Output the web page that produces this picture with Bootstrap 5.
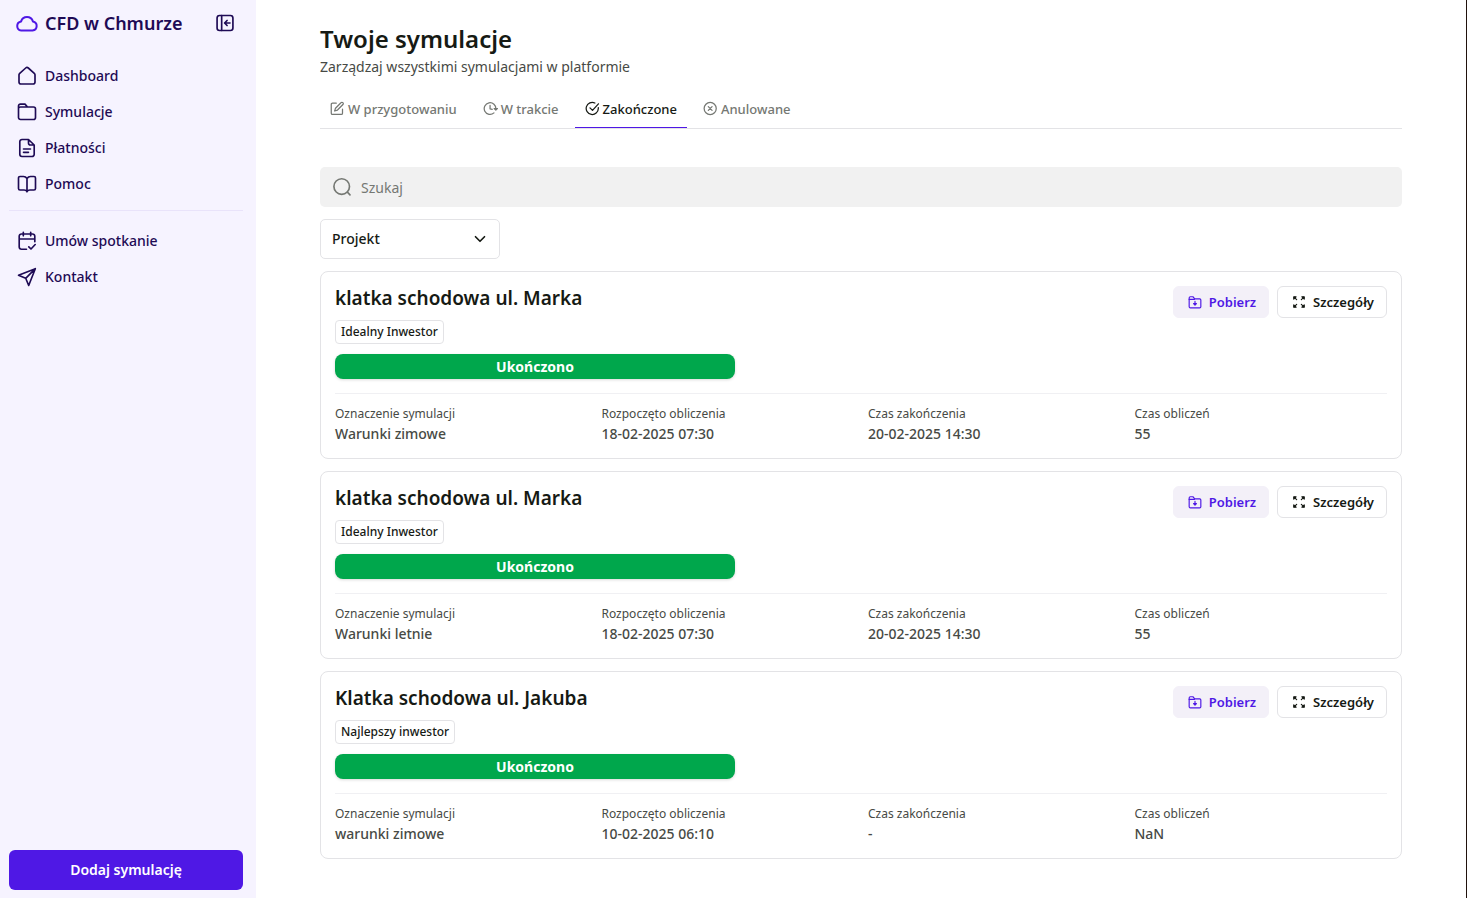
<!DOCTYPE html>
<html lang="pl">
<head>
<meta charset="utf-8">
<meta name="viewport" content="width=device-width, initial-scale=1">
<title>CFD w Chmurze – Twoje symulacje</title>
<link href="https://cdn.jsdelivr.net/npm/bootstrap@5.3.0/dist/css/bootstrap.min.css" rel="stylesheet">
<style>
  :root {
    --brand: #4f18e5;
    --navy: #1e0a55;
    --ink: #161a14;
    --soft: #474a45;
    --muted: #757873;
    --line: #e3e3e6;
  }
  body {
    font-family: "Noto Sans", sans-serif;
    font-size: 14px;
    line-height: 20px;
    color: var(--ink);
    background: #fff;
  }
  svg { fill: none; stroke: currentColor; stroke-width: 2; stroke-linecap: round; stroke-linejoin: round; flex-shrink: 0; }
  .line-icon { stroke-width: 1.65; }
  .shell { border-right: 1px solid #20120d; }
  .side { width: 256px; padding: 8px 13px 8px 9px; background: #f6f3ff; color: var(--navy); position: sticky; top: 0; }
  .brand { font-size: 18px; line-height: 30px; font-weight: 600; color: var(--navy); gap: 6px; padding-left: 6px; }
  .brand svg { color: var(--brand); }
  .collapse-btn { color: var(--navy); padding: 0 8px; line-height: 1; }
  .side .nav-link { display: flex; align-items: center; gap: 8px; height: 36px; padding: 0 8px; color: var(--navy); font-weight: 500; }
  .side-main { margin-top: 20px; padding-bottom: 8px; border-bottom: 1px solid #e9e3fa; }
  .side-more { padding-top: 12px; }
  .btn-add { height: 40px; padding: 0 12px 2px; background: var(--brand); color: #fff; font-size: 14px; font-weight: 600; border-radius: 6px; }
  .btn-add:hover { background: #4312cb; color: #fff; }
  .page { padding: 24px 64px; min-width: 0; }
  .page-title { font-size: 24px; line-height: 30px; font-weight: 600; }
  .page-lead { color: var(--soft); margin: 3px 0 22px; }
  .tabs { border-bottom: 1px solid var(--line); gap: 6px; margin-bottom: 38px; }
  .tabs .nav-link { display: flex; align-items: center; gap: 3px; height: 29px; padding: 0 10px 9px; font-size: 13px; line-height: 18px; font-weight: 500; color: var(--muted); border-bottom: 1px solid transparent; }
  .tabs .nav-link.active { color: var(--ink); border-bottom-color: var(--brand); }
  .search { height: 40px; padding: 0 12px; gap: 9px; background: #f1f1f1; border-radius: 5px; color: var(--muted); }
  .search .form-control { padding: 0; border: 0; background: none; box-shadow: none; font-size: 14px; }
  .search .form-control::placeholder { color: var(--muted); }
  .project-select { width: 180px; height: 40px; margin: 12px 0; padding: 0 11px 2px; font-size: 14px; font-weight: 500; color: var(--ink); border-color: var(--line); border-radius: 5px;
    background-image: url("data:image/svg+xml,%3Csvg xmlns='http://www.w3.org/2000/svg' viewBox='0 0 16 16'%3E%3Cpath d='M4 6l4 4 4-4' fill='none' stroke='%23161a14' stroke-width='1.500' stroke-linecap='round' stroke-linejoin='round'/%3E%3C/svg%3E");
    background-size: 18px 18px; background-position: right 10px center; }
  .sims { gap: 12px; }
  .sim { padding: 14px; border: 1px solid var(--line); border-radius: 8px; }
  .sim-head { gap: 10px; }
  .sim-title { font-size: 19px; line-height: 24px; font-weight: 600; }
  .investor { height: 24px; padding: 0 5px; font-size: 12px; line-height: 22px; font-weight: 500; border: 1px solid var(--line); border-radius: 4px; }
  .done-bar { max-width: 400px; height: 25px; line-height: 25px; background: #00a74c; border-radius: 8px; color: #fff; font-weight: 700; box-shadow: 0 1px 3px rgba(0,0,0,.15); }
  .btn-sim { display: inline-flex; align-items: center; justify-content: center; gap: 7px; height: 32px; padding: 0 12px 0 14px; font-size: 13px; line-height: 18px; font-weight: 600; border-radius: 6px; }
  .btn-get, .btn-get:hover { background: #f3f0f8; color: var(--brand); border-color: #f3f0f8; }
  .btn-more, .btn-more:hover { background: #fff; color: var(--ink); border-color: var(--line); }
  .facts { --bs-gutter-x: 14px; }
  .facts-wrap { margin-top: 14px; padding-top: 10px; border-top: 1px solid #f0f0f3; }
  .facts dt { font-size: 12px; line-height: 20px; font-weight: 400; color: var(--soft); }
  .facts dd { margin: 0; font-weight: 500; color: var(--soft); }
</style>
</head>
<body>
<svg class="d-none" aria-hidden="true">
  <symbol id="i-get" viewBox="0 0 24 24"><path d="M2 20V5a2 2 0 0 1 2-2h4.500l3 3.500H20a2 2 0 0 1 2 2V20a2 2 0 0 1-2 2H4a2 2 0 0 1-2-2z"/><path d="M2 7.500h9M12 11v6.500M9.500 14.800 12 17.300l2.500-2.500z"/></symbol>
  <symbol id="i-more" viewBox="0 0 24 24"><path fill="currentColor" d="M3 7V3h4zM17 3h4v4zM3 17v4h4zM21 17v4h-4z"/><path d="m4 4 4 4M20 4l-4 4M4 20l4-4M20 20l-4-4"/></symbol>
</svg>

<div class="shell d-flex min-vh-100">
  <aside class="side d-flex flex-column flex-shrink-0 vh-100">
    <div class="d-flex align-items-center justify-content-between">
      <a href="#" class="brand d-flex align-items-center text-decoration-none">
        <svg width="24" height="24" viewBox="0 0 24 24"><path d="M6.200 19.500h11.300a4.600 4.600 0 0 0 .4-9.100 6.200 6.200 0 0 0-11.800 0 4.600 4.600 0 0 0 .1 9.100z"/></svg>
        CFD w Chmurze
      </a>
      <button type="button" class="collapse-btn btn border-0" aria-label="Zwiń menu">
        <svg width="20" height="20" viewBox="0 0 24 24"><rect x="2.500" y="3" width="19" height="18" rx="3"/><path d="M8 3v18M18 12h-6M14.500 9l-3 3 3 3"/></svg>
      </button>
    </div>
    <nav>
      <ul class="side-main nav flex-column">
        <li><a class="nav-link" href="#"><svg class="line-icon" width="20" height="20" viewBox="0 0 20 20"><path d="M2 8.800a2 2 0 0 1 .700-1.500L8.700 2a2 2 0 0 1 2.600 0l6 5.300a2 2 0 0 1 .700 1.500V16a2 2 0 0 1-2 2H4a2 2 0 0 1-2-2z"/></svg>Dashboard</a></li>
        <li><a class="nav-link" href="#"><svg class="line-icon" width="20" height="20" viewBox="0 0 20 20"><path d="M1.500 15.500V4a1.900 1.900 0 0 1 1.900-1.900H8L10.500 5h6a2 2 0 0 1 2 2v8.500a2 2 0 0 1-2 2h-13a2 2 0 0 1-2-2zM1.500 6.500q0-1.500 2-1.500h7"/></svg>Symulacje</a></li>
        <li><a class="nav-link" href="#"><svg class="line-icon" width="20" height="20" viewBox="0 0 20 20"><path d="M11.500 1.500H5a2.200 2.200 0 0 0-2.200 2.200v12.600A2.200 2.200 0 0 0 5 18.500h10a2.200 2.200 0 0 0 2.200-2.200V7zM11.500 1.500V5a2 2 0 0 0 2 2h3.700M6.500 11h7M6.500 14.300h5"/></svg>Płatności</a></li>
        <li><a class="nav-link" href="#"><svg class="line-icon" width="20" height="20" viewBox="0 0 20 20"><path d="M10 4.500v13M10 4.500C9 3 8 2.500 6.500 2.500H3A1.500 1.500 0 0 0 1.500 4v10.500A1.500 1.500 0 0 0 3 16h4c1.500 0 2.500.5 3 1.800.500-1.300 1.500-1.800 3-1.800h4a1.500 1.500 0 0 0 1.500-1.500V4A1.500 1.500 0 0 0 17 2.500h-3.500C12 2.500 11 3 10 4.500z"/></svg>Pomoc</a></li>
      </ul>
      <ul class="side-more nav flex-column">
        <li><a class="nav-link" href="#"><svg class="line-icon" width="20" height="20" viewBox="0 0 20 20"><path d="M9.500 18.200H4.500A2.300 2.300 0 0 1 2.200 16V5.200A2.200 2.200 0 0 1 4.400 3h11.200a2.200 2.200 0 0 1 2.200 2.200v5.500M2.200 8h15.600M6.300 1.200v3.600M13.700 1.200v3.600M11.800 15.800l2.200 2.200 4.200-4.500"/></svg>Umów spotkanie</a></li>
        <li><a class="nav-link" href="#"><svg class="line-icon" width="20" height="20" viewBox="0 0 20 20"><path d="M18.300 1.700 1.500 8.300l7.200 3 3 7.200zM18.300 1.700l-9.600 9.600"/></svg>Kontakt</a></li>
      </ul>
    </nav>
    <button type="button" class="btn-add btn w-100 mt-auto">Dodaj symulację</button>
  </aside>

  <main class="page flex-grow-1">
    <h1 class="page-title mb-0">Twoje symulacje</h1>
    <p class="page-lead">Zarządzaj wszystkimi symulacjami w platformie</p>

    <ul class="tabs nav">
      <li class="nav-item"><a class="nav-link" href="#"><svg width="15" height="15" viewBox="0 0 24 24"><path d="M10 3.500H4A2 2 0 0 0 2 5.500V19.500A2 2 0 0 0 4 21.500H18A2 2 0 0 0 20 19.500V13M17.500 2.700a2.100 2.100 0 0 1 3.200 3L12 14.500 7.500 16l1.300-4.500z"/></svg>W przygotowaniu</a></li>
      <li class="nav-item"><a class="nav-link" href="#"><svg width="15" height="15" viewBox="0 0 24 24"><path d="M17.500 19A9.300 9.300 0 1 1 20.500 13M11.300 7v5.500l3.500 1M17.800 12l2.700 2.500 2.500-2.500z"/></svg>W trakcie</a></li>
      <li class="nav-item"><a class="nav-link active" aria-current="page" href="#"><svg width="15" height="15" viewBox="0 0 24 24"><path d="M21.300 10.500V12a9.700 9.700 0 1 1-5.500-8.800M8 11l4 4L21.500 4.500"/></svg>Zakończone</a></li>
      <li class="nav-item"><a class="nav-link" href="#"><svg width="15" height="15" viewBox="0 0 24 24"><circle cx="11.500" cy="12" r="9.700"/><path d="m8.500 9 6 6M14.500 9l-6 6"/></svg>Anulowane</a></li>
    </ul>

    <label class="search d-flex align-items-center">
      <svg class="line-icon" width="20" height="20" viewBox="0 0 20 20"><circle cx="9.700" cy="9.500" r="7.800"/><path d="m15.400 15.200 2.600 2.600"/></svg>
      <input type="search" class="form-control" placeholder="Szukaj" aria-label="Szukaj">
    </label>

    <select class="project-select form-select" aria-label="Projekt">
      <option>Projekt</option>
    </select>

    <div class="sims d-grid">
      <article class="sim">
        <div class="d-flex justify-content-between">
          <div class="sim-head d-flex flex-column align-items-start flex-grow-1">
            <h2 class="sim-title mb-0">klatka schodowa ul. Marka</h2>
            <span class="investor">Idealny Inwestor</span>
            <div class="done-bar w-100 text-center">Ukończono</div>
          </div>
          <div class="d-flex gap-2">
            <button type="button" class="btn btn-sim btn-get"><svg width="14" height="14"><use href="#i-get"/></svg>Pobierz</button>
            <button type="button" class="btn btn-sim btn-more"><svg width="14" height="14"><use href="#i-more"/></svg>Szczegóły</button>
          </div>
        </div>
        <div class="facts-wrap">
          <div class="facts row">
            <dl class="col-3 mb-0"><dt>Oznaczenie symulacji</dt><dd>Warunki zimowe</dd></dl>
            <dl class="col-3 mb-0"><dt>Rozpoczęto obliczenia</dt><dd>18-02-2025 07:30</dd></dl>
            <dl class="col-3 mb-0"><dt>Czas zakończenia</dt><dd>20-02-2025 14:30</dd></dl>
            <dl class="col-3 mb-0"><dt>Czas obliczeń</dt><dd>55</dd></dl>
          </div>
        </div>
      </article>

      <article class="sim">
        <div class="d-flex justify-content-between">
          <div class="sim-head d-flex flex-column align-items-start flex-grow-1">
            <h2 class="sim-title mb-0">klatka schodowa ul. Marka</h2>
            <span class="investor">Idealny Inwestor</span>
            <div class="done-bar w-100 text-center">Ukończono</div>
          </div>
          <div class="d-flex gap-2">
            <button type="button" class="btn btn-sim btn-get"><svg width="14" height="14"><use href="#i-get"/></svg>Pobierz</button>
            <button type="button" class="btn btn-sim btn-more"><svg width="14" height="14"><use href="#i-more"/></svg>Szczegóły</button>
          </div>
        </div>
        <div class="facts-wrap">
          <div class="facts row">
            <dl class="col-3 mb-0"><dt>Oznaczenie symulacji</dt><dd>Warunki letnie</dd></dl>
            <dl class="col-3 mb-0"><dt>Rozpoczęto obliczenia</dt><dd>18-02-2025 07:30</dd></dl>
            <dl class="col-3 mb-0"><dt>Czas zakończenia</dt><dd>20-02-2025 14:30</dd></dl>
            <dl class="col-3 mb-0"><dt>Czas obliczeń</dt><dd>55</dd></dl>
          </div>
        </div>
      </article>

      <article class="sim">
        <div class="d-flex justify-content-between">
          <div class="sim-head d-flex flex-column align-items-start flex-grow-1">
            <h2 class="sim-title mb-0">Klatka schodowa ul. Jakuba</h2>
            <span class="investor">Najlepszy inwestor</span>
            <div class="done-bar w-100 text-center">Ukończono</div>
          </div>
          <div class="d-flex gap-2">
            <button type="button" class="btn btn-sim btn-get"><svg width="14" height="14"><use href="#i-get"/></svg>Pobierz</button>
            <button type="button" class="btn btn-sim btn-more"><svg width="14" height="14"><use href="#i-more"/></svg>Szczegóły</button>
          </div>
        </div>
        <div class="facts-wrap">
          <div class="facts row">
            <dl class="col-3 mb-0"><dt>Oznaczenie symulacji</dt><dd>warunki zimowe</dd></dl>
            <dl class="col-3 mb-0"><dt>Rozpoczęto obliczenia</dt><dd>10-02-2025 06:10</dd></dl>
            <dl class="col-3 mb-0"><dt>Czas zakończenia</dt><dd>-</dd></dl>
            <dl class="col-3 mb-0"><dt>Czas obliczeń</dt><dd>NaN</dd></dl>
          </div>
        </div>
      </article>
    </div>
  </main>
</div>
<script src="https://cdn.jsdelivr.net/npm/bootstrap@5.3.0/dist/js/bootstrap.bundle.min.js"></script>
</body>
</html>
